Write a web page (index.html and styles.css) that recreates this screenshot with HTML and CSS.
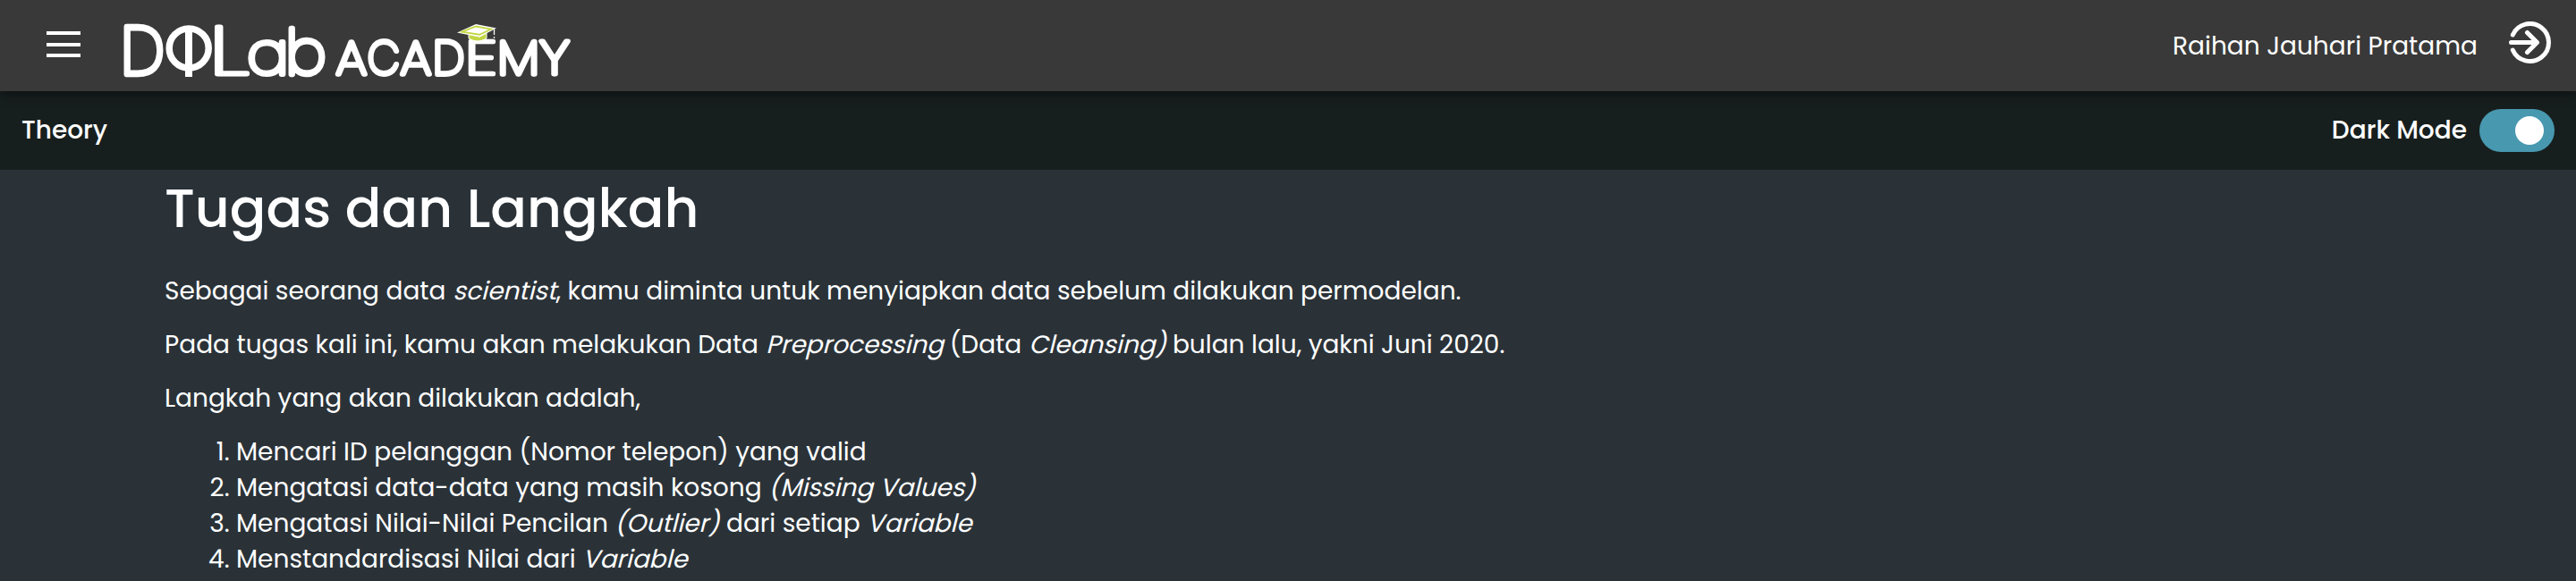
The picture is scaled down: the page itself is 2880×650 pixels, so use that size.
FILE: index.html
```html
<!DOCTYPE html>
<html lang="id">
<head>
<meta charset="utf-8">
<title>DQLab Academy</title>
<link rel="stylesheet" href="styles.css">
</head>
<body>
<header class="topbar">
  <button class="menu" aria-label="Menu"><span></span><span></span><span></span></button>
  <svg class="logo" width="510" height="102" viewBox="134 0 510 102">
    <g class="word-big">
      <text transform="translate(135.7 82.6) scale(.908 1)">D</text>
      <text transform="translate(234.2 82.6) scale(1.466 1)">L</text>
      <text transform="translate(276.4 82.6) scale(.904 .87)">a</text>
      <text transform="translate(319.9 82.6) scale(.883 .92)">b</text>
    </g>
    <circle class="ring" cx="211.2" cy="54" r="22"/>
    <rect class="solid" x="207" y="30" width="8" height="56"/>
    <g class="word-small">
      <text transform="translate(376.1 83.1) scale(1.079 1)">A</text>
      <text transform="translate(411.2 83.1) scale(.876 1)">C</text>
      <text transform="translate(448.1 83.1) scale(1.079 1)">A</text>
      <text transform="translate(484.7 83.1) scale(.935 1)">D</text>
      <text transform="translate(520.9 83.1) scale(1.34 1)">E</text>
      <text transform="translate(556.7 83.1) scale(1.104 1)">M</text>
      <text transform="translate(603.2 83.1) scale(1.243 1)">Y</text>
    </g>
    <path class="cap-base" d="M524 37v6q10 6 20 0v-6l-8 4z"/>
    <path class="cap-top" d="M511 36.5L532 27L555 31.5L536 41.5Z"/>
    <path class="cap-rim" d="M516.5 35.7L532 29.5L549 32.7L536 38.7Z"/>
    <path class="tassel" d="M552.5 33V39M552.5 41V43"/>
  </svg>
  <span class="user">Raihan Jauhari Pratama</span>
  <svg class="logout" width="48" height="48" viewBox="0 0 48 48">
    <path d="M4.3 15A21 21 0 1 1 4.3 32M2.5 23.5H30M20.5 12.5L31.5 23.5L20.5 34.5"/>
  </svg>
</header>
<nav class="subbar">
  <span>Theory</span>
  <div class="mode"><span class="mode-label">Dark Mode</span><span class="toggle"><span class="knob"></span></span></div>
</nav>
<main class="content">
  <h1>Tugas dan Langkah</h1>
  <p>Sebagai seorang data <em>scientist</em>, kamu diminta untuk menyiapkan data sebelum dilakukan permodelan.</p>
  <p>Pada tugas kali ini, kamu akan melakukan Data <em>Preprocessing</em> (Data <em>Cleansing)</em> bulan lalu, yakni Juni 2020.</p>
  <p>Langkah yang akan dilakukan adalah,</p>
  <ol>
    <li>Mencari ID pelanggan (Nomor telepon) yang valid</li>
    <li>Mengatasi data-data yang masih kosong <em>(Missing Values)</em></li>
    <li>Mengatasi Nilai-Nilai Pencilan <em>(Outlier)</em> dari setiap <em>Variable</em></li>
    <li>Menstandardisasi Nilai dari <em>Variable</em></li>
  </ol>
</main>
</body>
</html>
```
FILE: styles.css
```css
* { box-sizing: border-box; }
body {
  margin: 0;
  height: 650px;
  overflow: hidden;
  background: #2a3238;
  color: #fff;
  font-family: Poppins, Inter, sans-serif;
  font-size: 28px;
}
.topbar {
  position: relative;
  display: flex;
  align-items: center;
  height: 102px;
  padding: 0 27px 0 52px;
  background: #393939;
  box-shadow: 0 4px 12px rgba(0, 0, 0, .45);
}
.menu {
  display: flex;
  flex-direction: column;
  gap: 8.5px;
  width: 38px;
  padding: 0;
  margin: -3px 44px 0 0;
  border: 0;
  background: none;
}
.menu span { height: 4px; background: #fff; }
.logo { fill: #fff; overflow: visible; }
.logo text { stroke: #fff; stroke-linejoin: round; vector-effect: non-scaling-stroke; }
.word-big { font: 100 75px Poppins, Inter, sans-serif; stroke-width: 6.2; }
.word-small { font: 100 52px Poppins, Inter, sans-serif; stroke-width: 5.6; }
.ring { fill: none; stroke: #fff; stroke-width: 7.5; }
.cap-base { fill: #c3d645; stroke: #fff; stroke-width: 1; }
.cap-top { fill: #fff; }
.cap-rim { fill: none; stroke: #c3d645; stroke-width: 1.8; }
.tassel { stroke: #fff; stroke-width: 1.3; }
.user { margin: 2px 0 0 auto; }
.logout { margin: -7px 0 0 35px; fill: none; stroke: #fff; stroke-width: 5; stroke-linecap: round; stroke-linejoin: round; }
.subbar {
  display: flex;
  align-items: center;
  justify-content: space-between;
  height: 88px;
  padding: 0 24px;
  background: #171f1e;
  font-weight: 500;
}
.mode { display: flex; align-items: center; gap: 14px; }
.toggle { display: flex; justify-content: flex-end; align-items: center; width: 84px; height: 48px; padding-right: 12px; border-radius: 24px; background: #4898b0; }
.knob { width: 32px; height: 32px; border-radius: 50%; background: #fff; }
.content { padding: 7px 184px 0; line-height: 40px; }
.content em { display: inline-block; font-style: normal; transform: skewX(-14deg); transform-origin: 0 30px; }
h1 { margin: 0 0 37px; font-size: 60px; font-weight: 500; line-height: 72px; }
p { margin: 0 0 20px; }
ol { margin: 0; padding-left: 80px; }
```
